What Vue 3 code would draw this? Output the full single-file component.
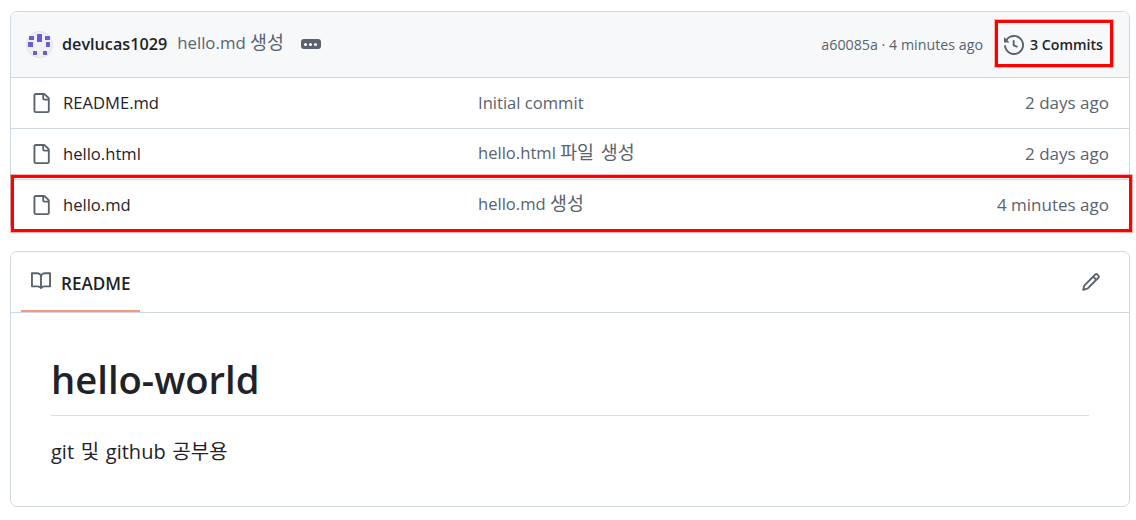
<script setup>
const files = [
  { name: 'README.md', msg: 'Initial commit', ko: '', age: '2 days ago' },
  { name: 'hello.html', msg: 'hello.html', ko: '파일 생성', age: '2 days ago' },
  { name: 'hello.md', msg: 'hello.md', ko: '생성', age: '4 minutes ago' }
]
const dots = [
  [11, 3, 5, 8], [3, 5, 5, 4], [19, 5, 5, 4],
  [2, 11, 5, 5], [20, 11, 4, 5], [7, 20, 4, 4], [17, 20, 4, 4]
]
</script>

<template>
  <div class="page">
    <div class="files">
      <div class="commit-bar">
        <svg class="avatar" viewBox="0 0 27 27">
          <circle cx="13.5" cy="13.5" r="13" fill="#f0f0f4" stroke="#dcdfe4" />
          <rect v-for="(d, i) in dots" :key="i" :x="d[0]" :y="d[1]" :width="d[2]" :height="d[3]" fill="#6a5fd0" />
        </svg>
        <span class="author">devlucas1029</span>
        <span class="commit-msg">hello.md <span class="ko">생성</span></span>
        <span class="more"><i></i><i></i><i></i></span>
        <span class="commit-info">a60085a · 4 minutes ago</span>
        <span class="commits">
          <svg class="history-icon" viewBox="0 0 16 16"><path d="m.427 1.927 1.215 1.215a8.002 8.002 0 1 1-1.6 5.685.75.75 0 1 1 1.493-.154 6.5 6.5 0 1 0 1.18-4.458l1.358 1.358A.25.25 0 0 1 3.896 6H.25A.25.25 0 0 1 0 5.75V2.104a.25.25 0 0 1 .427-.177ZM7.75 4a.75.75 0 0 1 .75.75v2.992l2.028.812a.75.75 0 0 1-.557 1.392l-2.5-1A.751.751 0 0 1 7 8.25v-3.5A.75.75 0 0 1 7.75 4Z" /></svg>
          3 Commits
        </span>
      </div>
      <div v-for="f in files" :key="f.name" class="row">
        <svg class="file-icon" viewBox="0 0 16 16"><path d="M2 1.75C2 .784 2.784 0 3.75 0h6.586c.464 0 .909.184 1.237.513l2.914 2.914c.329.328.513.773.513 1.237v9.586A1.75 1.75 0 0 1 13.25 16h-9.5A1.75 1.75 0 0 1 2 14.25Zm1.75-.25a.25.25 0 0 0-.25.25v12.5c0 .138.112.25.25.25h9.5a.25.25 0 0 0 .25-.25V6h-2.75A1.75 1.75 0 0 1 9 4.25V1.5Zm6.75.062V4.25c0 .138.112.25.25.25h2.688l-.011-.013-2.914-2.914-.013-.011Z" /></svg>
        <span class="file-name">{{ f.name }}</span>
        <span class="file-msg" :class="{ plain: !f.ko }">{{ f.msg }} <span v-if="f.ko" class="ko">{{ f.ko }}</span></span>
        <span class="file-age">{{ f.age }}</span>
      </div>
    </div>

    <div class="readme">
      <div class="readme-head">
        <div class="tab">
          <svg class="book-icon" viewBox="0 0 16 16"><path d="M0 1.75A.75.75 0 0 1 .75 1h4.253c1.227 0 2.317.59 3 1.501A3.743 3.743 0 0 1 11.006 1h4.245a.75.75 0 0 1 .75.75v10.5a.75.75 0 0 1-.75.75h-4.507a2.25 2.25 0 0 0-1.591.659l-.622.621a.75.75 0 0 1-1.06 0l-.622-.621A2.25 2.25 0 0 0 5.258 13H.75a.75.75 0 0 1-.75-.75Zm7.251 10.324.004-5.073-.002-2.253A2.25 2.25 0 0 0 5.003 2.5H1.5v9h3.757a3.75 3.75 0 0 1 1.994.574ZM8.755 4.75l-.004 7.322a3.752 3.752 0 0 1 1.992-.572H14.5v-9h-3.495a2.25 2.25 0 0 0-2.25 2.25Z" /></svg>
          <span class="tab-label">README</span>
        </div>
        <svg class="pencil-icon" viewBox="0 0 16 16"><path d="M11.013 1.427a1.75 1.75 0 0 1 2.474 0l1.086 1.086a1.75 1.75 0 0 1 0 2.474l-8.61 8.61c-.21.21-.47.364-.756.445l-3.251.93a.75.75 0 0 1-.927-.928l.929-3.25c.081-.286.235-.547.445-.758l8.61-8.61Zm.176 4.823L9.75 4.81l-6.286 6.287a.253.253 0 0 0-.064.108l-.558 1.953 1.953-.558a.253.253 0 0 0 .108-.064Zm1.238-3.763a.25.25 0 0 0-.354 0L10.811 3.75l1.439 1.44 1.263-1.263a.25.25 0 0 0 0-.354Z" /></svg>
      </div>
      <div class="readme-body">
        <h1>hello-world</h1>
        <p>git 및 github 공부용</p>
      </div>
    </div>

    <div class="mark mark-commits"></div>
    <div class="mark mark-row"></div>
  </div>
</template>

<style scoped>
.page {
  position: relative;
  box-sizing: border-box;
  width: 1136px;
  height: 520px;
  padding: 11px 6px 0 10px;
  background: #fff;
  color: #1f2328;
  font-family: "Open Sans", "Noto Sans CJK KR", sans-serif;
}
.files {
  border: 1px solid #d1d9e0;
  border-radius: 7px;
  overflow: hidden;
}
.commit-bar {
  display: flex;
  align-items: center;
  height: 65px;
  padding: 0 26px 0 15px;
  background: #f6f8fa;
}
.avatar {
  width: 27px;
  height: 27px;
  margin-right: 9px;
}
.author {
  margin-bottom: 2px;
  font-size: 16.2px;
  font-weight: 600;
}
.commit-msg {
  margin: 0 0 3px 10px;
  font-size: 16.8px;
  line-height: 20px;
  color: #59636e;
}
.ko {
  font-size: 18.4px;
  line-height: 1;
  word-spacing: 2px;
}
.more {
  display: flex;
  align-items: center;
  justify-content: center;
  gap: 2px;
  width: 20px;
  height: 10px;
  margin: 0 0 1px 17px;
  border-radius: 3px;
  background: #59636e;
}
.more i {
  width: 3px;
  height: 3px;
  border-radius: 50%;
  background: #fff;
}
.commit-info {
  margin: 0 0 1px auto;
  font-size: 14.25px;
  color: #59636e;
}
.commits {
  display: flex;
  align-items: center;
  gap: 6px;
  margin-left: 21px;
  font-size: 14.2px;
  font-weight: 600;
}
.history-icon {
  width: 20px;
  height: 20px;
  fill: #59636e;
}
.row {
  display: flex;
  align-items: center;
  height: 50px;
  padding: 0 20px 0 20px;
  border-top: 1px solid #d1d9e0;
  font-size: 16.6px;
}
.file-icon {
  flex: none;
  width: 20px;
  height: 20px;
  fill: #59636e;
}
.file-name {
  width: 415px;
  margin: 0 0 2px 12px;
}
.file-msg {
  flex: 1;
  margin-bottom: 3px;
  line-height: 20px;
  color: #59636e;
}
.file-msg.plain {
  margin-bottom: 1px;
}
.file-age {
  margin-bottom: 2px;
  font-size: 17px;
  color: #59636e;
}
.readme {
  height: 256px;
  margin-top: 20px;
  border: 1px solid #d1d9e0;
  border-radius: 7px;
  box-sizing: border-box;
}
.readme-head {
  display: flex;
  align-items: flex-start;
  justify-content: space-between;
  height: 60px;
  padding: 0 28px 0 10px;
  border-bottom: 1px solid #d1d9e0;
}
.tab {
  display: flex;
  align-items: center;
  gap: 10px;
  box-sizing: border-box;
  width: 119px;
  height: 60px;
  padding-left: 10px;
  border-bottom: 2px solid #fc9682;
  font-size: 17.1px;
  font-weight: 600;
}
.tab-label {
  margin-top: 4px;
}
.book-icon {
  width: 20px;
  height: 20px;
  fill: #59636e;
}
.pencil-icon {
  width: 20px;
  height: 20px;
  margin-top: 20px;
  fill: #59636e;
}
.readme-body {
  padding: 40px 40px 0;
}
h1 {
  margin: 0;
  padding-bottom: 10px;
  border-bottom: 1px solid #d8dee4;
  font-size: 38.2px;
  font-weight: 600;
  line-height: 52px;
}
p {
  margin: 18px 0 0;
  font-size: 20px;
  line-height: 36px;
  word-spacing: 1.5px;
}
.mark {
  position: absolute;
  box-sizing: border-box;
  border: 3px solid #ff0000;
  box-shadow: 0 0 0 1px rgba(255, 0, 0, 0.3);
}
.mark-commits {
  left: 995px;
  top: 20px;
  width: 118px;
  height: 47px;
}
.mark-row {
  left: 11px;
  top: 175px;
  width: 1121px;
  height: 57px;
}
</style>
